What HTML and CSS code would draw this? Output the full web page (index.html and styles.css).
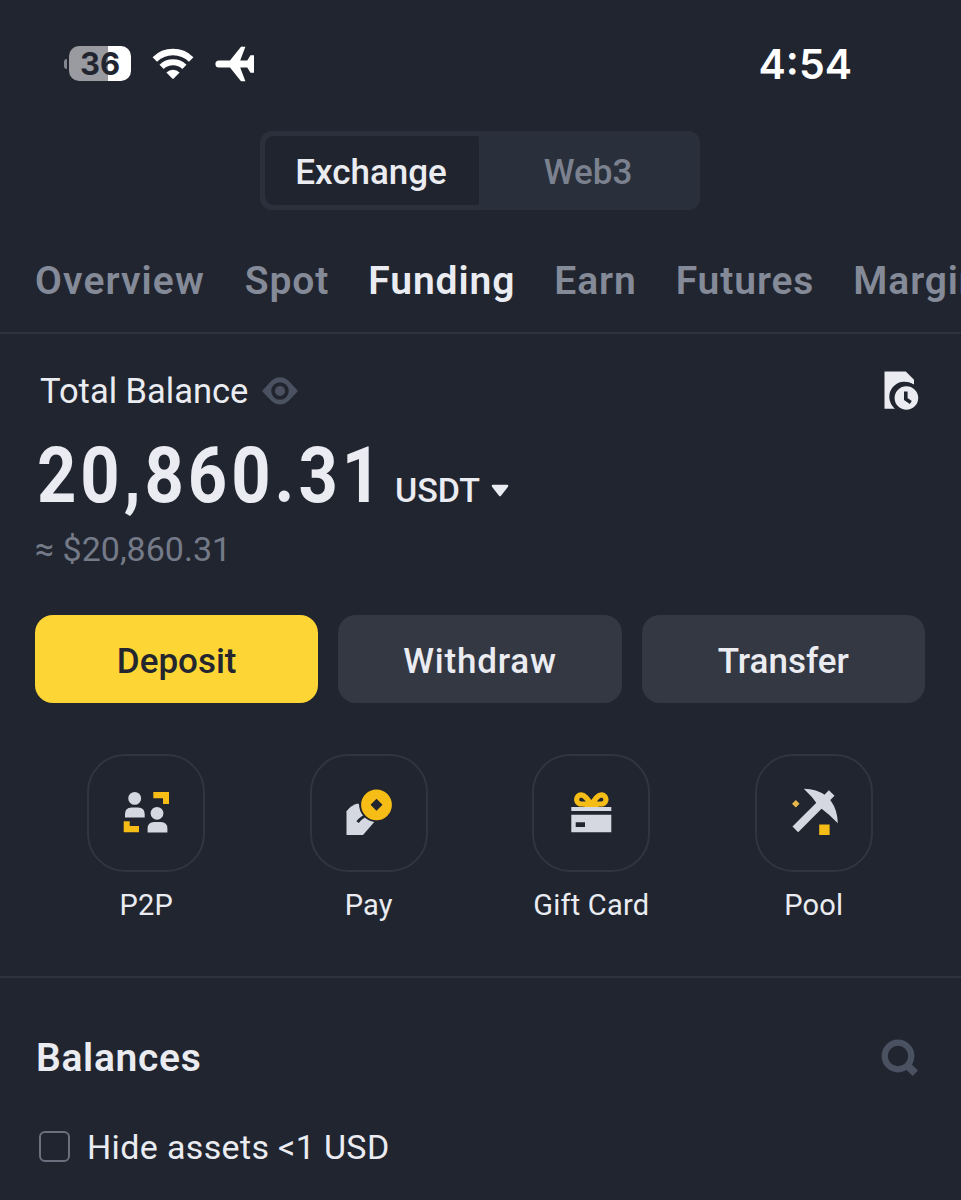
FILE: index.html
```html
<!DOCTYPE html>
<html lang="en">
<head>
<meta charset="UTF-8" />
<meta name="viewport" content="width=device-width, initial-scale=1" />
<title>Wallet - Funding</title>
<link rel="stylesheet" href="styles.css">
</head>
<body>

<div class="status-bar">
  <div class="status-left">
    <span class="battery-nub"></span>
    <div class="battery">36</div>
    <svg class="wifi" width="42" height="32" viewBox="0 0 42 32">
      <path d="M2.8 11.5a26 26 0 0 1 36.4 0" fill="none" stroke="#fff" stroke-width="6.4" />
      <path d="M9.6 18.9a16.4 16.4 0 0 1 22.8 0" fill="none" stroke="#fff" stroke-width="6" />
      <path d="M14.4 24.4a9.4 9.4 0 0 1 13.2 0L22 30.3q-1 1-2 0z" fill="#fff" />
    </svg>
    <svg class="plane" width="39" height="36" viewBox="0 0 39 36">
      <path d="M4 14.4h11L25.4 1.4Q26.5.2 28 .8h2.4L25.2 14.4h7l3.3-5.2H39v17.6h-3.5l-3.3-5.2h-7l5.2 13.6H28q-1.5.4-2.6-.8L15 21.6H4a3.6 3.6 0 0 1 0-7.2z" fill="#fff" />
    </svg>
  </div>
  <div class="clock">4:54</div>
</div>

<div class="switcher">
  <div class="switch-item active">Exchange</div>
  <div class="switch-item">Web3</div>
</div>

<nav class="tabs">
  <a class="first">Overview</a>
  <a>Spot</a>
  <a class="active">Funding</a>
  <a>Earn</a>
  <a>Futures</a>
  <a>Margin</a>
</nav>

<main>
  <section class="summary">
    <div class="summary-head">
      <span class="summary-title">Total Balance</span>
      <svg class="eye" width="36" height="28" viewBox="0 0 36 28">
        <path fill-rule="evenodd" d="M0 14 9 4.3Q13 .3 18 .3t9 4L36 14l-9 9.5q-4 4-9 4t-9-4zM18 5.2a8.8 8.8 0 1 0 0 17.6 8.8 8.8 0 0 0 0-17.6z" fill="#4a5160" />
        <circle cx="18" cy="14" r="5" fill="#4a5160" />
      </svg>
      <svg class="history" width="35" height="40" viewBox="0 0 35 40">
        <path d="M.5.5h21.3l8.2 8.2V14A15 15 0 0 0 11 37.7H.5z" fill="#eaecf2" />
        <circle cx="22.4" cy="27" r="13.6" fill="#eaecf2" stroke="#21252f" stroke-width="3.6" />
        <path d="M21.8 20.6v7.4l5 3.4" fill="none" stroke="#21252f" stroke-width="3.6" />
      </svg>
    </div>
    <div class="amount-row">
      <span class="amount">20,860.31</span>
      <span class="unit">USDT</span>
      <svg class="caret" width="18" height="13" viewBox="0 0 18 13"><path d="M1.5.8h15q1.4.6.5 2L10 11.7q-1 1-2 0L1 2.8Q.1 1.4 1.5.8z" fill="#eaecf2" /></svg>
    </div>
    <div class="approx">≈ $20,860.31</div>

    <div class="actions">
      <button class="btn deposit">Deposit</button>
      <button class="btn withdraw">Withdraw</button>
      <button class="btn">Transfer</button>
    </div>

    <div class="shortcuts">
      <div class="shortcut">
        <div class="shortcut-icon">
          <svg width="52" height="52" viewBox="0 0 52 52">
            <g fill="#d5d8e0">
              <circle cx="14.7" cy="11.4" r="6.4" />
              <path d="M5 30.6V27q0-6.6 6.6-6.6h6.5q6.6 0 6.6 6.6v3.6z" />
              <circle cx="37" cy="26.3" r="6.4" />
              <path d="M27.6 45.4v-3.8q0-6.6 6.6-6.6h6.6q6.6 0 6.6 6.6v3.8z" />
            </g>
            <path d="M33.3 5H49v12h-6v-5.7h-9.7zM3.7 34.3h6V39H19v6.3H3.7z" fill="#f6bd16" />
          </svg>
        </div>
        <span>P2P</span>
      </div>
      <div class="shortcut">
        <div class="shortcut-icon">
          <svg width="52" height="52" viewBox="0 0 52 52">
            <path d="M3.5 24.2Q8 18 15 16.5L33 33 20 48H3.500z" fill="#d5d8e0" />
            <circle cx="33.500" cy="17.700" r="17.400" fill="#21252f" />
            <path d="M14.600 35.200q4-5.500 9-6.600l7 4" fill="none" stroke="#21252f" stroke-width="3" />
            <path fill-rule="evenodd" d="M33.500 2.400a15.400 15.400 0 1 0 0 30.800 15.400 15.400 0 0 0 0-30.800zm0 9.400 6 6-6 6-6-6z" fill="#f6bd16" />
          </svg>
        </div>
        <span>Pay</span>
      </div>
      <div class="shortcut">
        <div class="shortcut-icon">
          <svg width="52" height="52" viewBox="0 0 52 52">
            <path d="M26.3 17.5C22 11 19.5 7.8 16 7.8a4.7 4.7 0 0 0-1 9.2h22.6a4.7 4.7 0 0 0-1-9.2C33 7.8 30.6 11 26.3 17.5z" fill="none" stroke="#f6bd16" stroke-width="5.2" />
            <path d="M17 20q5-.5 7-6h4.6q2 5.5 7 6z" fill="#f6bd16" />
            <path fill-rule="evenodd" d="M6.3 20h40v4h-40zM6.3 27.7h40v17.6h-40zM10.7 35.3v4.8H20v-4.8z" fill="#d5d8e0" />
          </svg>
        </div>
        <span>Gift Card</span>
      </div>
      <div class="shortcut">
        <div class="shortcut-icon">
          <svg width="52" height="52" viewBox="0 0 52 52">
            <path d="M7.3 42.4 43.7 6" stroke="#d5d8e0" stroke-width="8" />
            <path d="M15.8 1.7Q29 2 37.6 8.4l5.2 5.4Q49.5 23 49.8 36.3 41.5 27.5 31.5 20 25 10 15.8 1.7z" fill="#d5d8e0" />
            <path d="m7.8 12.9 3.8 3.8-3.8 3.8L4 16.7z" fill="#e3b74a" />
            <path d="M31.2 37.5h10.4V48H31.2z" fill="#f6bd16" />
          </svg>
        </div>
        <span>Pool</span>
      </div>
    </div>
  </section>

  <section class="balances">
    <div class="balances-head">
      <h2>Balances</h2>
      <svg width="38" height="38" viewBox="0 0 38 38">
        <circle cx="17" cy="17" r="13.3" fill="none" stroke="#4a5160" stroke-width="6.2" />
        <path d="M25.5 25.5 34.3 34.3" stroke="#4a5160" stroke-width="7.6" />
      </svg>
    </div>
    <label class="hide-small">
      <input type="checkbox" />
      <span>Hide assets &lt;1 USD</span>
    </label>
  </section>
</main>

</body>
</html>
```

FILE: styles.css
```css
:root {
  --bg: #21252f;
  --line: #2d323d;
  --text: #eaecf2;
  --muted: #848a98;
  --yellow: #fdd535;
}
* {
  box-sizing: border-box;
}
body {
  margin: 0;
  height: 1200px;
  overflow: hidden;
  background: var(--bg);
  color: var(--text);
  font-family: Roboto, "Noto Sans", sans-serif;
}
svg {
  display: block;
  flex: none;
}
.status-bar {
  display: flex;
  justify-content: space-between;
  align-items: center;
  height: 127px;
  padding: 0 109px 0 64px;
}
.status-left {
  display: flex;
  align-items: center;
}
.battery-nub {
  width: 3px;
  height: 10px;
  margin-right: 2px;
  border-radius: 3px 0 0 3px;
  background: #84868d;
}
.battery {
  width: 62px;
  height: 35px;
  border-radius: 10px;
  background: linear-gradient(90deg, #9a9ba1 39px, #fff 39px);
  color: var(--bg);
  font: 700 31px/36px Inter, sans-serif;
  text-align: center;
}
.wifi {
  margin-left: 21px;
}
.plane {
  margin-left: 21px;
}
.clock {
  color: #fff;
  font: 600 41px/50px Inter, sans-serif;
}
.switcher {
  display: flex;
  width: 440px;
  height: 79px;
  margin: 4px auto 0 260px;
  padding: 5px;
  border-radius: 12px;
  background: linear-gradient(90deg, #2b303c 50%, #29303b 50%);
}
.switch-item {
  flex: 1;
  padding-left: 2px;
  color: #7b818e;
  font-size: 35px;
  font-weight: 500;
  line-height: 73px;
  text-align: center;
}
.switch-item.active {
  flex: 0 0 214px;
  height: 69px;
  padding: 0 2px 0 0;
  border-radius: 9px 2px 2px 9px;
  background: #20242e;
  color: var(--text);
}
.tabs {
  display: flex;
  gap: 39px;
  height: 124px;
  padding: 47px 0 0 35px;
  border-bottom: 2px solid var(--line);
  color: var(--muted);
  font-size: 39px;
  font-weight: 600;
  line-height: 48px;
  letter-spacing: 0.9px;
  white-space: nowrap;
}
.tabs .first {
  padding-right: 1px;
  letter-spacing: 1.1px;
}
.tabs .active {
  color: var(--text);
}
.summary {
  height: 644px;
  padding: 34px 36px 0 35px;
  border-bottom: 2px solid var(--line);
}
.summary-head {
  display: flex;
  align-items: center;
  height: 46px;
  padding: 0 6px 0 5px;
}
.summary-title {
  font-size: 34.5px;
  line-height: 48px;
}
.eye {
  margin-left: 14px;
}
.history {
  margin-left: auto;
}
.amount-row {
  display: flex;
  align-items: baseline;
  height: 112px;
  padding-left: 2px;
}
/* narrow, widely spaced digits */
.amount {
  width: 340px;
  font-size: 78px;
  font-weight: 700;
  line-height: 123px;
  letter-spacing: 4.5px;
  white-space: nowrap;
  transform: scaleX(0.88);
  transform-origin: left;
}
.unit {
  margin-left: 18px;
  font-size: 34px;
  font-weight: 500;
}
.caret {
  margin-left: 11px;
  transform: translateY(-5px);
}
.approx {
  height: 89px;
  color: #747a88;
  font-size: 34px;
  line-height: 47px;
}
.actions {
  display: grid;
  grid-template-columns: repeat(3, 1fr);
  gap: 20px;
}
.btn {
  height: 88px;
  padding: 4px 0 0;
  border: none;
  border-radius: 18px;
  background: #333843;
  color: var(--text);
  font-family: inherit;
  font-size: 35px;
  font-weight: 500;
}
.btn.deposit {
  background: var(--yellow);
  color: #23262f;
}
.btn.withdraw {
  letter-spacing: 0.8px;
}
.shortcuts {
  display: grid;
  grid-template-columns: repeat(4, 1fr);
  margin-top: 51px;
}
.shortcut {
  display: flex;
  flex-direction: column;
  align-items: center;
  font-size: 29px;
  line-height: 34px;
  letter-spacing: 0.2px;
}
.shortcut-icon {
  display: flex;
  align-items: center;
  justify-content: center;
  width: 118px;
  height: 118px;
  margin-bottom: 16px;
  border: 2px solid #30353f;
  border-radius: 38px;
}
.balances {
  padding: 57px 42px 0 36px;
}
.balances-head {
  display: flex;
  align-items: center;
  justify-content: space-between;
  height: 46px;
}
.balances-head h2 {
  margin: 0;
  font-size: 39px;
  font-weight: 600;
  line-height: 48px;
  letter-spacing: 0.7px;
}
.hide-small {
  display: flex;
  align-items: center;
  margin-top: 42px;
  padding-left: 3px;
  font-size: 34px;
  line-height: 48px;
  letter-spacing: 0.35px;
}
.hide-small input {
  appearance: none;
  width: 31px;
  height: 31px;
  margin: 0 17px 2px 0;
  border: 2px solid #6a707e;
  border-radius: 6px;
}
```
